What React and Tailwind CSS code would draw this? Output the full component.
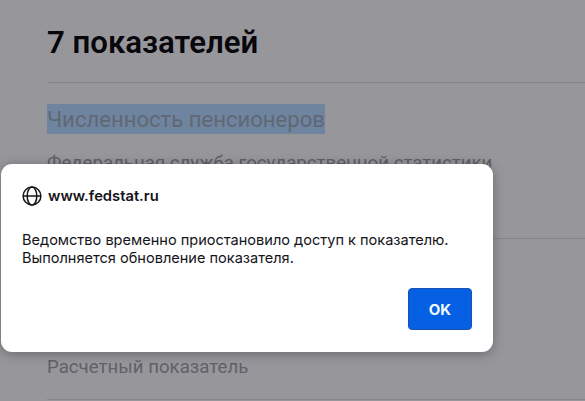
const indicators = [
  {
    title: 'Численность пенсионеров',
    source: 'Федеральная служба государственной статистики',
  },
]

function GlobeIcon() {
  return (
    <svg className="h-5 w-5 shrink-0" viewBox="0 0 20 20" fill="none" stroke="currentColor" strokeWidth="1.5">
      <circle cx="10" cy="10" r="8.9" />
      <ellipse cx="10" cy="10" rx="4.8" ry="8.9" />
      <path d="M1.1 10h17.8" />
    </svg>
  )
}

function Indicator({ title, source }) {
  return (
    <div className="h-[156px] border-t border-[#858489] pt-[21px]">
      <h2 className="w-fit whitespace-nowrap bg-[#6f849f] pt-px text-[22.1px] leading-[29px] text-[#606874]">{title}</h2>
      <p className="mt-[17px] whitespace-nowrap text-[18.67px] leading-6 text-[#605f65]">{source}</p>
    </div>
  )
}

function AlertDialog() {
  return (
    <div
      role="alertdialog"
      className="absolute top-[164px] left-px flex h-[188px] w-[492px] flex-col rounded-[11px] bg-white px-[21px] pt-[22px] font-['Inter','Liberation_Sans',sans-serif] text-[#15141a] shadow-[0_2px_12px_rgba(0,0,0,0.3)]"
    >
      <div className="flex items-center gap-[6px]">
        <GlobeIcon />
        <span className="text-[14.75px] leading-5 font-semibold">www.fedstat.ru</span>
      </div>
      <p className="mt-[25px] whitespace-nowrap text-[14.56px] leading-[18px]">
        Ведомство временно приостановило доступ к показателю.
        <br />
        Выполняется обновление показателя.
      </p>
      <button className="mt-[21px] h-[42px] w-16 self-end rounded-[4px] border border-[#1b50b5] bg-[#0560e3] pt-0.5 text-[15px] font-bold text-[#f0fbff]">
        OK
      </button>
    </div>
  )
}

export default function App() {
  return (
    <div className="relative h-[401px] w-[585px] overflow-hidden bg-[#97969b] pl-[47px] font-['Roboto','Liberation_Sans',sans-serif]">
      <h1 className="pt-[23px] text-[31.2px] leading-10 font-semibold text-[#08070c]">7 показателей</h1>
      <div className="mt-[19px]">
        {indicators.map((item) => (
          <Indicator key={item.title} {...item} />
        ))}
        <div className="flex h-[162px] flex-col justify-end border-y border-[#858489] pb-[20px]">
          <p className="text-[18.67px] leading-6 text-[#626167]">Расчетный показатель</p>
        </div>
      </div>
      <AlertDialog />
    </div>
  )
}
